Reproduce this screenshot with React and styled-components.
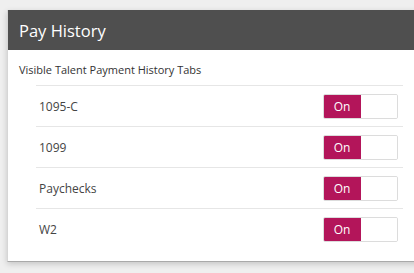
import React from "react";
import styled, { createGlobalStyle } from "styled-components";

const Global = createGlobalStyle`
  html, body { margin: 0; padding: 0; }
  body {
    background: #efefef;
    font-family: "Open Sans", "DejaVu Sans", sans-serif;
    overflow: hidden;
    width: 414px;
    height: 273px;
  }
`;

const Page = styled.div`
  padding: 10px 0 0 7px;
`;

const Card = styled.section`
  width: 416px;
  background: #fff;
  border-left: 1px solid #d6d6d6;
  border-bottom: 1px solid #a9a9a9;
  box-shadow: 0 2px 6px rgba(0, 0, 0, 0.18);
  box-sizing: border-box;
`;

const Header = styled.header`
  height: 40px;
  background: #4f4f4f;
  display: flex;
  align-items: center;
  padding-left: 11px;
`;

const Title = styled.h2`
  margin: 0;
  color: #fff;
  font-size: 16.5px;
  font-weight: 400;
`;

const Body = styled.div`
  padding: 12px 20px 12px 11px;
`;

const Subtitle = styled.div`
  font-size: 11px;
  line-height: 16px;
  color: #333;
  margin-bottom: 7px;
`;

const List = styled.div`
  margin-left: 17px;
`;

const Row = styled.div`
  height: 40px;
  border-top: 1px solid #e6e6e6;
  display: flex;
  align-items: center;
  justify-content: space-between;
  padding: 0 5px 0 3px;
`;

const Label = styled.span`
  font-size: 12px;
  color: #444;
`;

const Toggle = styled.div`
  display: flex;
  width: 75px;
  height: 25px;
  box-sizing: border-box;
  border: 1px solid #dcdcdc;
  border-radius: 2px;
  overflow: hidden;
`;

const ToggleOn = styled.div`
  width: 38px;
  background: #b3155a;
  color: #fff;
  font-size: 12px;
  display: flex;
  align-items: center;
  justify-content: center;
  margin: -1px 0 -1px -1px;
  border-radius: 2px 0 0 2px;
`;

const ToggleOff = styled.div`
  flex: 1;
  background: #fff;
`;

const items = ["1095-C", "1099", "Paychecks", "W2"];

export default function App() {
  return (
    <>
      <Global />
      <Page>
        <Card>
          <Header>
            <Title>Pay History</Title>
          </Header>
          <Body>
            <Subtitle>Visible Talent Payment History Tabs</Subtitle>
            <List>
              {items.map((it) => (
                <Row key={it}>
                  <Label>{it}</Label>
                  <Toggle>
                    <ToggleOn>On</ToggleOn>
                    <ToggleOff />
                  </Toggle>
                </Row>
              ))}
            </List>
          </Body>
        </Card>
      </Page>
    </>
  );
}
